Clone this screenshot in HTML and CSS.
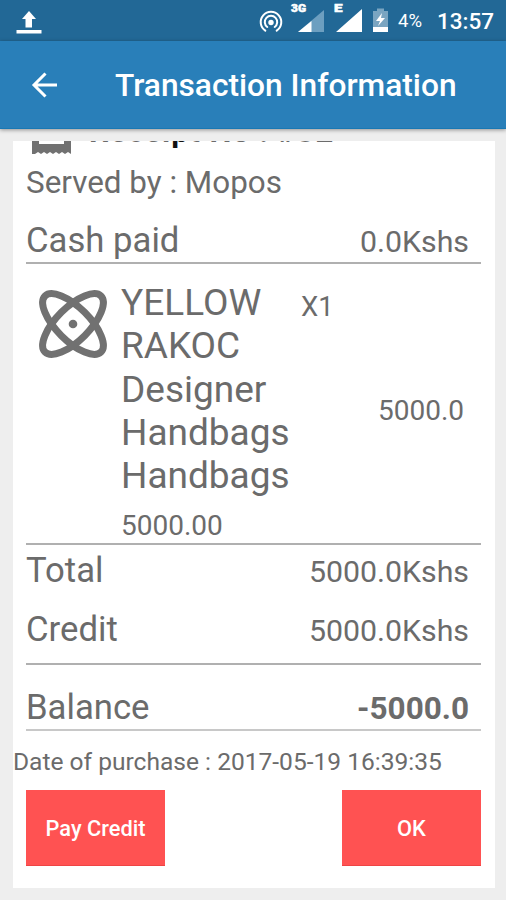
FILE: index.html
```html
<!DOCTYPE html>
<html lang="en">
<head>
<meta charset="utf-8">
<title>Transaction Information</title>
<link rel="stylesheet" href="styles.css">
</head>
<body>
<header class="status">
  <svg class="upload" viewBox="0 0 26 24"><path fill="#fff" d="M13 0 L20 8 H16 V16.500 H9.500 V8 H6 Z M.500 19 H25.500 V22.500 H.500 Z"/></svg>
  <svg class="icons" viewBox="0 0 136 41">
    <g fill="none" stroke="#fff" stroke-width="2" stroke-linecap="round">
      <path d="M6.300 30.700 A10.300 10.300 0 1 1 17.700 30.700"/>
      <path d="M8.300 27 A6.200 6.200 0 1 1 15.700 27"/>
    </g>
    <circle cx="12" cy="22.500" r="2.700" fill="#fff"/>
    <path fill="#6d9fc0" d="M65 10 V32 H39 Z"/>
    <path fill="#fff" d="M52.500 21 V32 H39 Z M103 9 V32 H77 Z"/>
    <path fill="#7aa5c1" d="M114 11 H118 V8.500 H125 V11 H129 V27 H114 Z"/>
    <path fill="#fff" d="M123 13 L117 21 H121 L119 26 L126 18 H122 Z M114 27 H129 V32 H114 Z"/>
    <text class="net" x="32" y="12" textLength="15" lengthAdjust="spacingAndGlyphs">3G</text>
    <text class="net" x="75" y="12" textLength="8.500" lengthAdjust="spacingAndGlyphs">E</text>
  </svg>
  <span class="pct">4%</span>
  <span class="clock">13:57</span>
</header>
<nav class="bar">
  <svg class="back" viewBox="0 0 26 26"><path d="M25 13 H2 M13.500 1.500 L2 13 L13.500 24.500" fill="none" stroke="#fff" stroke-width="3"/></svg>
  <h1>Transaction Information</h1>
</nav>
<main class="card">
  <div class="receipt">
    <svg viewBox="0 0 39 39"><path fill="#717171" d="M0 0 H39 V39 L36 37 L33 39 L30 37 L27 39 L24 37 L21 39 L18 37 L15 39 L12 37 L9 39 L6 37 L3 39 L0 39 Z"/><path fill="#fff" d="M7 4 H32 V29 H7 Z"/></svg>
    <b>Recei<span class="ink">p</span>t No : #32</b>
  </div>
  <div class="served"><span>Served by : Mopos</span></div>
  <div class="row cash"><span class="label">Cash paid</span><span class="amount">0.0Kshs</span></div>
  <section class="item">
    <svg class="atom" viewBox="0 0 68 68">
      <g fill="none" stroke="#717171" stroke-width="7">
        <ellipse cx="34" cy="34" rx="39.600" ry="16.500" transform="rotate(45 34 34)"/>
        <ellipse cx="34" cy="34" rx="39.600" ry="16.500" transform="rotate(-45 34 34)"/>
      </g>
      <circle cx="34" cy="34" r="4.300" fill="#717171"/>
    </svg>
    <div class="desc">
      <div class="name">YELLOW<br>RAKOC<br>Designer<br>Handbags<br>Handbags</div>
      <div class="price"><span>5000.00</span></div>
    </div>
    <div class="qty"><span>X1</span></div>
    <div class="sum"><span>5000.0</span></div>
  </section>
  <div class="row total"><span class="label">Total</span><span class="amount">5000.0Kshs</span></div>
  <div class="row credit"><span class="label">Credit</span><span class="amount">5000.0Kshs</span></div>
  <div class="row balance"><span class="label">Balance</span><b class="amount">-5000.0</b></div>
  <div class="date"><span>Date of purchase : 2017-05-19 16:39:35</span></div>
  <div class="actions"><button>Pay Credit</button><button>OK</button></div>
</main>
</body>
</html>
```
FILE: styles.css
```css
* { box-sizing: border-box; }
body {
  margin: 0;
  height: 900px;
  overflow: hidden;
  background: #eee;
  color: #6b6b6b;
  font-family: Roboto, "Liberation Sans", sans-serif;
}
svg { display: block; flex: none; overflow: visible; }
.status {
  display: flex;
  height: 41px;
  background: #226896;
  color: #fff;
}
.upload { width: 26px; height: 24px; margin: 11px 0 0 16px; }
.icons { width: 136px; height: 41px; margin-left: 217px; }
.net { font: 900 11px Roboto, sans-serif; fill: #fff; stroke: #fff; stroke-width: .5px; }
.pct { width: 42px; padding-left: 3px; font-size: 18.500px; line-height: 43px; }
.clock { font-size: 22.500px; font-weight: 500; line-height: 43px; }
.bar {
  display: flex;
  align-items: center;
  height: 88px;
  background: #297fb9;
  border-bottom: 1px solid #1878b4;
  box-shadow: 0 1px 4px rgba(0, 0, 0, .4);
}
.back { width: 26px; height: 26px; margin-left: 32px; }
h1 {
  margin: 1px 0 0 57px;
  color: #fff;
  font-size: 31.700px;
  font-weight: 500;
  white-space: nowrap;
}
.card {
  width: 482px;
  height: 747px;
  margin: 12px 0 0 13px;
  overflow: hidden;
  background: #fff;
  white-space: nowrap;
}
.receipt {
  display: flex;
  height: 37px;
  margin-top: -26px;
  padding-left: 19px;
  font-size: 31px;
  line-height: 33px;
}
.receipt svg { width: 39px; height: 39px; }
.receipt b { margin-left: 18px; letter-spacing: .9px; }
.ink { color: #111; }
.served {
  height: 62px;
  padding-left: 13px;
  font-size: 31.400px;
  line-height: 62px;
}
.row {
  display: flex;
  align-items: baseline;
  justify-content: space-between;
  margin: 0 14px 0 13px;
  padding-right: 12px;
}
.label { font-size: 34.700px; }
.amount { font-size: 30.300px; }
.cash { height: 50px; line-height: 52px; border-bottom: 2px solid #b0b0b0; }
.item {
  display: flex;
  height: 281px;
  margin: 0 14px 0 13px;
  border-bottom: 2px solid #b0b0b0;
}
.atom { width: 68px; height: 68px; margin: 26px 0 0 13px; }
.desc { width: 180px; padding: 17px 0 0 14px; }
.name { font-size: 37px; line-height: 43.300px; }
.price { font-size: 28px; line-height: 57px; }
.qty { width: 77px; padding-left: 14px; font-size: 27.500px; line-height: 85px; }
.sum { font-size: 28px; line-height: 294px; padding-left: 14px; }
.total { height: 50px; line-height: 50px; }
.credit { height: 70px; line-height: 68px; border-bottom: 2px solid #b0b0b0; }
.balance { height: 66px; line-height: 84px; border-bottom: 2px solid #c8c8c8; }
.balance .amount { font-size: 31.500px; }
.date { height: 59px; font-size: 24.550px; line-height: 62px; }
.actions {
  display: flex;
  justify-content: space-between;
  margin: 0 14px 0 13px;
}
button {
  width: 139px;
  height: 76px;
  padding: 2px 0 0;
  border: 0;
  border-bottom: 1px solid #ee4444;
  background: #ff5252;
  color: #fff;
  font: 500 21.800px Roboto, sans-serif;
}
```
